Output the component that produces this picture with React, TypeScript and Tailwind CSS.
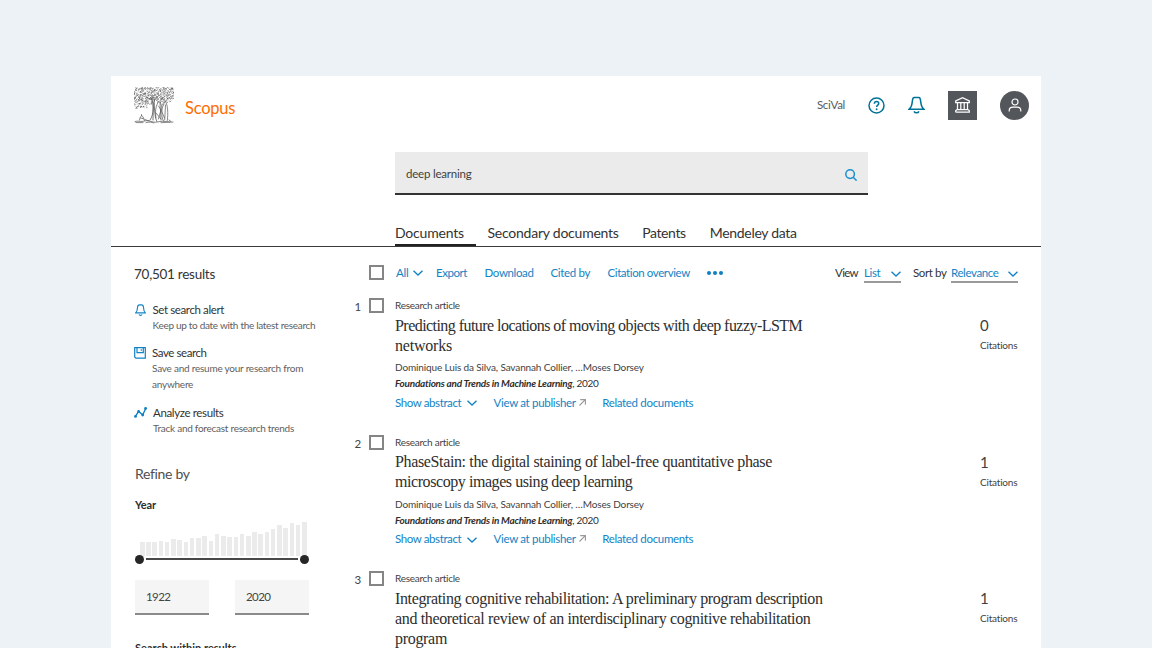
import type { ReactNode } from 'react';

function makeRandom(seed: number) {
  let s = seed;
  return () => {
    s = (s * 16807) % 2147483647;
    return s / 2147483647;
  };
}

function leaves() {
  const rnd = makeRandom(77);
  const parts: string[] = [];
  for (let y = 1; y < 22; y += 1.5) {
    for (let x = 0.8; x < 39.5; x += 1.6) {
      const canopy = y < 13 || (x < 18 && y < 19) || (x < 13 && x > 2 && y < 22) || (x > 22 && x < 37 && y < 15);
      const corner = x < 1.5 && (y > 18 || y < 1.5);
      if (!canopy || corner) continue;
      const px = x + rnd() * 1.2 - 0.6;
      const py = y + rnd() * 1.2 - 0.6;
      const a = rnd() * 2.8 - 1.4;
      const b = rnd() * 2.2 - 1.1;
      parts.push(`M${px.toFixed(1)} ${py.toFixed(1)}q${a.toFixed(1)} ${b.toFixed(1)} ${(b * 1.4).toFixed(1)} ${(a * 1.1).toFixed(1)}`);
    }
  }
  return parts.join('');
}

const canopyPath = leaves();

function TreeLogo() {
  return (
    <svg className="h-[37px] w-10 shrink-0" viewBox="0 0 40 37" fill="none" stroke="#555" strokeLinecap="round">
      <path d={canopyPath} strokeWidth="0.6" />
      <path d="M17.5 11c1.5 4 2 8 1.600 12s-1 7-3 10M20.500 12c-.6 5 0 11 .6 15.500.3 3 .8 5 1.800 7M19.200 15c.2 6-.1 12-.2 18" strokeWidth="0.8" />
      <path d="M17 8l2.500 5M24 9l-4 5M12 10l6 3" strokeWidth="0.7" />
      <path d="M22 31c-1-6-.5-13 3-16.500 2.500 2 3.300 6 3 10s0 7 1.500 9.500M28.500 18c.5-2 2-3.500 3-3.500 2.300 4 2.800 12 1.800 19M24.500 19c2 3 4 7 6 12M30 17c-2 4-4.500 9-5.500 15M26 16l1 17M31.500 18l-.8 15M22 26l5 6" strokeWidth="0.7" />
      <path d="M5.500 33c.4-2.500 1-3.600 2-4.200M8.500 29c1 1 1.200 3 2 4.500M6.500 31l3 .8M7.500 27.600v1" strokeWidth="0.7" />
      <path d="M1 34.500c3-1 5 .4 8-.2s5-1.200 8 .1 6 .8 9 .1 8 .5 13 .6M2 35.600h7M12 35.600c4-1 5-.3 8 .3M27 35.700l9-.5M11 32.500l4 1.500M35 33l2 1.500" strokeWidth="0.7" />
    </svg>
  );
}

function HelpIcon() {
  return (
    <svg className="size-[17px]" viewBox="0 0 17 17" fill="none" stroke="#007398" strokeWidth="1.5">
      <circle cx="8.500" cy="8.500" r="7.500" />
      <path d="M6.400 6.700c0-1.400.9-2.200 2.200-2.200s2.100.8 2.100 2c0 1.700-2.100 1.700-2.100 3.600" />
      <circle cx="8.600" cy="12.200" r=".95" fill="#007398" stroke="none" />
    </svg>
  );
}

function HeaderBell() {
  return (
    <svg className="h-[18px] w-[17px]" viewBox="0 0 17 18" fill="none" stroke="#007398" strokeWidth="1.500">
      <path d="M1.200 13.200H15.800C13.600 11.500 12.900 8.300 12.600 4.900 12.400 2.600 11.900 1.400 10.900 1.400H6.100C5.100 1.400 4.600 2.600 4.400 4.900 4.100 8.300 3.400 11.500 1.200 13.200Z" />
      <path d="M6 15.400c.4.900 1.300 1.400 2.500 1.400s2.100-.5 2.500-1.400" />
    </svg>
  );
}

function SmallBell() {
  return (
    <svg className="h-3 w-[11px]" viewBox="0 0 11 12" fill="none" stroke="#1283c4" strokeWidth="1.150">
      <path d="M.6 8.900H10.400C8.900 7.700 8.600 5.800 8.500 3.500 8.400 1.800 7.600.8 6.500.8H4.500C3.400.8 2.600 1.800 2.500 3.500 2.400 5.800 2.100 7.700.6 8.900Z" />
      <path d="M4 10.400c.2.700.8 1 1.500 1s1.300-.3 1.500-1" />
    </svg>
  );
}

function SaveIcon() {
  return (
    <svg className="size-3" viewBox="0 0 12 12" fill="none" stroke="#1283c4" strokeWidth="1.200">
      <path d="M.7.600H11.300V11.200H2L.7 9.900Z" />
      <path d="M3 .8V5.700H9.300V.8M7.300 2.200v1.600" />
    </svg>
  );
}

function AnalyzeIcon() {
  return (
    <svg className="h-[11px] w-[13px]" viewBox="0 0 13 11" fill="#0f7fc1" stroke="#0f7fc1" strokeWidth="1.350">
      <path d="M1.400 9.400L4.600 4.400 8.700 8 11.700 1.500" fill="none" />
      <g stroke="none">
        <circle cx="1.500" cy="9.400" r="1.400" />
        <circle cx="4.600" cy="4.400" r="1.350" />
        <circle cx="8.700" cy="8" r="1.400" />
        <circle cx="11.600" cy="1.500" r="1.400" />
      </g>
    </svg>
  );
}

function InstitutionIcon() {
  return (
    <svg className="h-4 w-[15px]" viewBox="0 0 15 16" fill="none" stroke="#fff" strokeWidth="1.250">
      <path d="M.7 5.700V4L7.500.8 14.300 4V5.700ZM2.500 5.700V12.500M5.800 5.700V12.500M9.200 5.700V12.500M12.500 5.700V12.500M1.800 12.600H13.200M.7 15.200H14.300V13.800L13.200 12.600M.7 15.200V13.800L1.800 12.600" />
    </svg>
  );
}

function UserIcon() {
  return (
    <svg className="size-[14px]" viewBox="0 0 14 14" fill="none" stroke="#fff" strokeWidth="1.200">
      <circle cx="7" cy="4" r="3" />
      <path d="M1.200 13.400V12.600C1.200 10.400 3 9.200 5 9.200H9C11 9.200 12.800 10.400 12.800 12.600V13.400" />
    </svg>
  );
}

function SearchIcon() {
  return (
    <svg className="size-3" viewBox="0 0 12 12" fill="none" stroke="#1b8fd0" strokeWidth="1.500">
      <circle cx="5.100" cy="5.100" r="4.300" />
      <path d="M8.200 8.200L11.600 11.600" />
    </svg>
  );
}

function Chevron({ className }: { className: string }) {
  return (
    <svg className={className} viewBox="0 0 10 6" fill="none" stroke="#1283c4" strokeWidth="1.350">
      <path d="M.5.800L5 5 9.500.800" />
    </svg>
  );
}

function ExternalArrow() {
  return (
    <svg className="ml-[3px] size-[7px]" viewBox="0 0 7 7" fill="none" stroke="#999" strokeWidth="1.100">
      <path d="M1.200.6H6.400V5.800M6.300.7L.5 6.500" />
    </svg>
  );
}

const tabs = [
  { label: 'Documents', box: 'w-[81px]', text: 'tracking-[-0.19px]', gap: 'mr-[11.5px]', active: true },
  { label: 'Secondary documents', box: '', text: 'tracking-[-0.23px]', gap: 'mr-[23.5px]', active: false },
  { label: 'Patents', box: '', text: 'tracking-[-0.39px]', gap: 'mr-[24px]', active: false },
  { label: 'Mendeley data', box: '', text: 'tracking-[-0.3px]', gap: '', active: false },
];

const yearBars = [14, 14, 14, 15.5, 14, 17, 16.500, 14.500, 18, 18, 20, 15.500, 22, 20, 19, 19, 22, 20, 24, 22, 24.500, 27, 31, 28, 33.500, 31, 34.500];

type Line = { text: string; spacing: string };

const results: { titles: Line[]; citations: string }[] = [
  {
    titles: [
      { text: 'Predicting future locations of moving objects with deep fuzzy-LSTM', spacing: 'tracking-[-0.55px]' },
      { text: 'networks', spacing: 'tracking-[-0.21px]' },
    ],
    citations: '0',
  },
  {
    titles: [
      { text: 'PhaseStain: the digital staining of label-free quantitative phase', spacing: 'tracking-[-0.36px]' },
      { text: 'microscopy images using deep learning', spacing: 'tracking-[-0.43px]' },
    ],
    citations: '1',
  },
  {
    titles: [
      { text: 'Integrating cognitive rehabilitation: A preliminary program description', spacing: 'tracking-[-0.36px]' },
      { text: 'and theoretical review of an interdisciplinary cognitive rehabilitation', spacing: 'tracking-[-0.35px]' },
      { text: 'program', spacing: 'tracking-[-0.31px]' },
    ],
    citations: '1',
  },
];

function Checkbox() {
  return <span className="block size-[15px] shrink-0 border-2 border-[#858585] bg-white" />;
}

function SideAction({ icon, title, titleClass, textClass, children, className }: { icon: ReactNode; title: string; titleClass: string; textClass: string; children: ReactNode; className: string }) {
  return (
    <div className={`flex ${className}`}>
      <span className="w-[18px] shrink-0 pt-[2px]">{icon}</span>
      <div className={textClass}>
        <div className={`h-[15px] text-[11.5px] leading-4 text-[#333] ${titleClass}`}>{title}</div>
        <div className="text-[10px] leading-4 text-[#5e5e5e]">{children}</div>
      </div>
    </div>
  );
}

function Sidebar() {
  return (
    <aside className="w-[242px] shrink-0 pl-[23px] pt-[17px]">
      <h2 className="text-[13.5px] leading-5 tracking-[-0.26px] text-[#333]">70,501 results</h2>
      <SideAction className="mt-[18px] pl-[0.5px]" icon={<SmallBell />} title="Set search alert" titleClass="tracking-[-0.39px]" textClass="">
        <span className="tracking-[-0.3px]">Keep up to date with the latest research</span>
      </SideAction>
      <SideAction className="mt-3" icon={<SaveIcon />} title="Save search" titleClass="tracking-[-0.42px]" textClass="">
        <span className="block tracking-[-0.23px]">Save and resume your research from</span>
        <span className="block tracking-[-0.23px]">anywhere</span>
      </SideAction>
      <SideAction className="mt-[13px]" icon={<AnalyzeIcon />} title="Analyze results" titleClass="tracking-[-0.36px]" textClass="pl-[1px]">
        <span className="tracking-[-0.26px]">Track and forecast research trends</span>
      </SideAction>
      <div className="pl-[1px]">
        <h3 className="mt-[28px] text-[14px] leading-5 tracking-[-0.32px] text-[#4f4f4f]">Refine by</h3>
        <h4 className="mt-[13px] text-[11px] font-bold leading-4 tracking-[-0.11px] text-[#2e2e2e]">Year</h4>
        <div className="mt-[7px] flex h-9 w-[168px] items-end gap-[1.7px] pl-[5px]">
          {yearBars.map((h, i) => (
            <span key={i} className="w-[4.550px] shrink-0 bg-[#ebebeb]" style={{ height: h }} />
          ))}
        </div>
        <div className="-mt-[1px] flex h-2 w-[174px] items-center gap-[2px]">
          <span className="size-[9px] shrink-0 rounded-full bg-[#262626]" />
          <span className="h-[2px] grow bg-[#484848]" />
          <span className="size-[9px] shrink-0 rounded-full bg-[#262626]" />
        </div>
        <div className="mt-[17px] flex gap-[26px] text-[11.5px] tracking-[-0.6px] text-[#444]">
          <span className="flex h-[35px] w-[74px] items-center border-b-2 border-[#8a8a8a] bg-[#f5f5f5] pl-[11px]">1922</span>
          <span className="flex h-[35px] w-[74px] items-center border-b-2 border-[#8a8a8a] bg-[#f5f5f5] pl-[11px]">2020</span>
        </div>
        <h4 className="mt-[25px] text-[11px] font-bold leading-4 text-[#2e2e2e]">Search within results</h4>
      </div>
    </aside>
  );
}

function Toolbar() {
  return (
    <div className="flex h-5 items-center whitespace-nowrap pl-4 text-[11.5px] text-[#1283c4]">
      <Checkbox />
      <span className="ml-[12px] w-[17px] pt-px tracking-[-0.3px]">All</span>
      <Chevron className="mt-[2px] h-[6px] w-[10px]" />
      <span className="ml-[13px] w-[48.500px] pt-px tracking-[-0.43px]">Export</span>
      <span className="w-[66px] pt-px tracking-[-0.36px]">Download</span>
      <span className="w-[57px] pt-px tracking-[-0.34px]">Cited by</span>
      <span className="w-[99px] pt-px tracking-[-0.4px]">Citation overview</span>
      <span className="mt-[2px] flex gap-[1.500px]">
        <i className="size-[4.500px] rounded-full bg-[#0f7fc1]" />
        <i className="size-[4.500px] rounded-full bg-[#0f7fc1]" />
        <i className="size-[4.500px] rounded-full bg-[#0f7fc1]" />
      </span>
      <div className="ml-auto mr-[23px] flex h-5 items-center">
        <span className="w-[29px] pt-[2px] tracking-[-0.65px] text-[#333]">View</span>
        <span className="mt-[1px] flex h-5 w-[37px] items-center justify-between border-b-2 border-[#9a9a9a] pt-[2px] tracking-[-0.39px]">
          List
          <Chevron className="mt-[3px] h-[6px] w-[10px]" />
        </span>
        <span className="ml-[12px] w-[38px] pt-[2px] tracking-[-0.39px] text-[#333]">Sort by</span>
        <span className="mt-[1px] flex h-5 w-[67px] items-center justify-between border-b-2 border-[#9a9a9a] pt-[2px] tracking-[-0.39px]">
          Relevance
          <Chevron className="mt-[3px] h-[6px] w-[10px]" />
        </span>
      </div>
    </div>
  );
}

function Result({ index, titles, citations }: { index: number; titles: Line[]; citations: string }) {
  return (
    <article className="flex min-h-[136.500px]">
      <span className="w-4 shrink-0 pl-[1.5px] text-[11.5px] leading-[17px] text-[#444]">{index}</span>
      <Checkbox />
      <div className="w-[596px] shrink-0 whitespace-nowrap pl-[11px]">
        <div className="text-[10px] leading-[14px] tracking-[-0.27px] text-[#3f3f3f]">Research article</div>
        <h3 className="mt-[3.5px] font-['Liberation_Serif',serif] text-[16px] leading-[20.400px] text-[#2e2e2e]">
          {titles.map((line) => (
            <span key={line.text} className={`block ${line.spacing}`}>
              {line.text}
            </span>
          ))}
        </h3>
        <div className="mt-[3px] text-[10px] leading-4 tracking-[-0.13px] text-[#3f3f3f]">Dominique Luis da Silva, Savannah Collier, …Moses Dorsey</div>
        <div className="text-[10px] leading-4 tracking-[-0.25px] text-[#2e2e2e]">
          <b className="italic">Foundations and Trends in Machine Learning</b>
          <span className="tracking-[-0.3px]">, 2020</span>
        </div>
        <div className="mt-[2px] flex h-[18px] items-center text-[11.5px] text-[#1283c4]">
          <span className="w-[72px] tracking-[-0.4px]">Show abstract</span>
          <Chevron className="mt-[2px] h-[6px] w-[10px]" />
          <span className="ml-[16.500px] tracking-[-0.31px]">View at publisher</span>
          <ExternalArrow />
          <span className="ml-[16.500px] tracking-[-0.33px]">Related documents</span>
        </div>
      </div>
      <div className="pt-[18px] text-[#3f3f3f]">
        <div className="text-[15px] leading-[19px]">{citations}</div>
        <div className="mt-[2px] text-[10px] leading-4 tracking-[-0.2px]">Citations</div>
      </div>
    </article>
  );
}

export default function App() {
  return (
    <div className="h-[648px] w-[1152px] overflow-hidden bg-[#ecf2f6] px-[111px] pt-[76px] font-['Lato',sans-serif]">
      <div className="flex h-[572px] w-[930px] flex-col overflow-hidden bg-white">
        <header className="flex h-[76px] shrink-0 pl-[23px] pr-3 pt-[11px]">
          <TreeLogo />
          <span className="ml-[11px] mt-[9px] text-[16.5px] leading-6 tracking-[-0.25px] text-[#ff6c00]">Scopus</span>
          <div className="ml-auto mt-[3px] flex h-[30px] items-center">
            <span className="mr-[23px] text-[11.5px] tracking-[-0.3px] text-[#5a5a5a]">SciVal</span>
            <HelpIcon />
            <span className="ml-[23px]"><HeaderBell /></span>
            <span className="ml-[23px] flex size-[29px] items-center justify-center bg-[#53565a]"><InstitutionIcon /></span>
            <span className="ml-[23px] flex size-[29px] items-center justify-center rounded-full bg-[#53565a]"><UserIcon /></span>
          </div>
        </header>
        <div className="ml-[284px] flex h-[43px] w-[473px] shrink-0 items-center justify-between border-b-2 border-[#333] bg-[#ebebeb] pl-[11px] pr-[11px]">
          <span className="pt-[3px] text-[11.5px] tracking-[-0.21px] text-[#3f3f3f]">deep learning</span>
          <span className="pt-[4px]"><SearchIcon /></span>
        </div>
        <nav className="flex h-[52px] shrink-0 items-end border-b border-[#3a3a3a] pl-[284px] text-[14px] text-[#333]">
          {tabs.map((t) => (
            <span key={t.label} className={`block h-[23px] shrink-0 border-b-2 leading-5 ${t.box} ${t.gap} ${t.text} ${t.active ? 'border-[#222]' : 'border-transparent'}`}>
              {t.label}
            </span>
          ))}
        </nav>
        <div className="flex min-h-0 grow">
          <Sidebar />
          <main className="w-[688px] shrink-0 pt-[15px]">
            <Toolbar />
            <div className="mt-[16px]">
              {results.map((r, i) => (
                <Result key={i} index={i + 1} titles={r.titles} citations={r.citations} />
              ))}
            </div>
          </main>
        </div>
      </div>
    </div>
  );
}
